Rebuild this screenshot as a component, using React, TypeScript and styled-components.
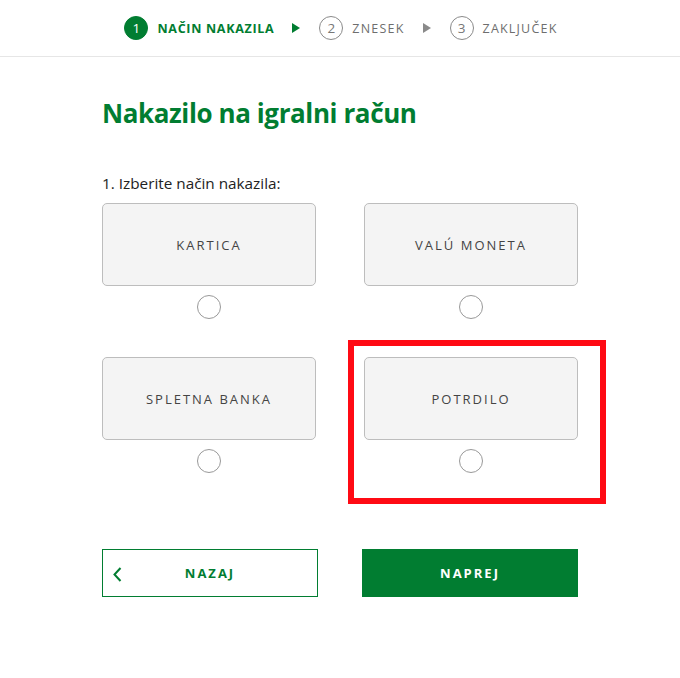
import React, { useState } from 'react'
import styled, { createGlobalStyle } from 'styled-components'

const GREEN = '#017d31'

const GlobalStyle = createGlobalStyle`
  html, body {
    margin: 0;
    padding: 0;
    background: #fff;
  }
  body {
    font-family: 'Open Sans', 'Noto Sans', sans-serif;
  }
`

const Page = styled.div`
  width: 680px;
  min-height: 678px;
  background: #fff;
`

const Steps = styled.div`
  height: 56px;
  border-bottom: 1px solid #e6e6e6;
  display: flex;
  align-items: center;
  justify-content: center;
  padding-left: 2px;
`

const Step = styled.div`
  display: flex;
  align-items: center;
  gap: 9px;
`

const StepNumber = styled.span<{ active?: boolean }>`
  width: 24px;
  height: 24px;
  border-radius: 50%;
  box-sizing: border-box;
  display: flex;
  align-items: center;
  justify-content: center;
  font-size: 13.5px;
  border: 1.5px solid ${p => (p.active ? GREEN : '#8a8a8a')};
  background: ${p => (p.active ? GREEN : 'transparent')};
  color: ${p => (p.active ? '#fff' : '#777')};
`

const StepLabel = styled.span<{ active?: boolean }>`
  font-size: 12.5px;
  letter-spacing: ${p => (p.active ? '0.7px' : '1.2px')};
  font-weight: ${p => (p.active ? 700 : 400)};
  color: ${p => (p.active ? GREEN : '#6e6e6e')};
`

const Arrow = styled.span<{ active?: boolean }>`
  width: 0;
  height: 0;
  border-top: 5.5px solid transparent;
  border-bottom: 5.5px solid transparent;
  border-left: 8px solid ${p => (p.active ? GREEN : '#8a8a8a')};
  margin: 0 19px 0 18px;
`

const Content = styled.main`
  width: 476px;
  margin: 0 auto;
`

const Title = styled.h1`
  margin: 38px 0 0;
  font-size: 26px;
  line-height: 36px;
  font-weight: 700;
  color: ${GREEN};
  letter-spacing: -0.4px;
`

const Question = styled.p`
  margin: 42px 0 0;
  font-size: 15.3px;
  line-height: 20px;
  color: #222;
`

const OptionGrid = styled.div`
  margin-top: 10px;
  display: grid;
  grid-template-columns: 1fr 1fr;
  column-gap: 48px;
  row-gap: 38px;
`

const Option = styled.label`
  position: relative;
  display: flex;
  flex-direction: column;
  align-items: center;
  gap: 9px;
  cursor: pointer;
`

const OptionCard = styled.div`
  width: 100%;
  height: 83px;
  box-sizing: border-box;
  border: 1px solid #bdbdbd;
  border-radius: 5px;
  background: #f4f4f4;
  display: flex;
  align-items: center;
  justify-content: center;
  font-size: 13px;
  letter-spacing: 2px;
  color: #444;
`

const Radio = styled.span<{ checked?: boolean }>`
  width: 24px;
  height: 24px;
  box-sizing: border-box;
  border-radius: 50%;
  border: 1.3px solid #999;
  background: ${p => (p.checked ? GREEN : '#fff')};
`

const Highlight = styled.div`
  position: absolute;
  left: -16px;
  top: -17px;
  width: 258px;
  height: 164px;
  box-sizing: border-box;
  border: 6px solid #ff0a14;
  pointer-events: none;
`

const Actions = styled.div`
  margin-top: 76px;
  display: grid;
  grid-template-columns: 1fr 1fr;
  column-gap: 44px;
`

const Button = styled.button<{ primary?: boolean }>`
  position: relative;
  height: 48px;
  box-sizing: border-box;
  border: 1px solid ${GREEN};
  background: ${p => (p.primary ? GREEN : '#fff')};
  color: ${p => (p.primary ? '#fff' : GREEN)};
  font-family: 'Open Sans', 'Noto Sans', sans-serif;
  font-size: 13px;
  font-weight: 700;
  letter-spacing: 2px;
  display: flex;
  align-items: center;
  justify-content: center;
  cursor: pointer;
  padding: 0;
`

const BackIcon = styled.svg`
  position: absolute;
  left: 10px;
  top: 17px;
`

const options = ['KARTICA', 'VALÚ MONETA', 'SPLETNA BANKA', 'POTRDILO']

export default function App() {
  const [selected, setSelected] = useState<number | null>(null)

  return (
    <Page>
      <GlobalStyle />
      <Steps>
        <Step>
          <StepNumber active>1</StepNumber>
          <StepLabel active>NAČIN NAKAZILA</StepLabel>
        </Step>
        <Arrow active />
        <Step>
          <StepNumber>2</StepNumber>
          <StepLabel>ZNESEK</StepLabel>
        </Step>
        <Arrow />
        <Step>
          <StepNumber>3</StepNumber>
          <StepLabel>ZAKLJUČEK</StepLabel>
        </Step>
      </Steps>

      <Content>
        <Title>Nakazilo na igralni račun</Title>
        <Question>1. Izberite način nakazila:</Question>

        <OptionGrid>
          {options.map((name, i) => (
            <Option key={name} onClick={() => setSelected(i)}>
              <OptionCard>{name}</OptionCard>
              <Radio checked={selected === i} />
              {i === 3 && <Highlight />}
            </Option>
          ))}
        </OptionGrid>

        <Actions>
          <Button>
            <BackIcon width="9" height="15" viewBox="0 0 9 15">
              <path d="M7.5 1 L1.5 7.5 L7.5 14" fill="none" stroke={GREEN} strokeWidth="2" />
            </BackIcon>
            NAZAJ
          </Button>
          <Button primary>NAPREJ</Button>
        </Actions>
      </Content>
    </Page>
  )
}
